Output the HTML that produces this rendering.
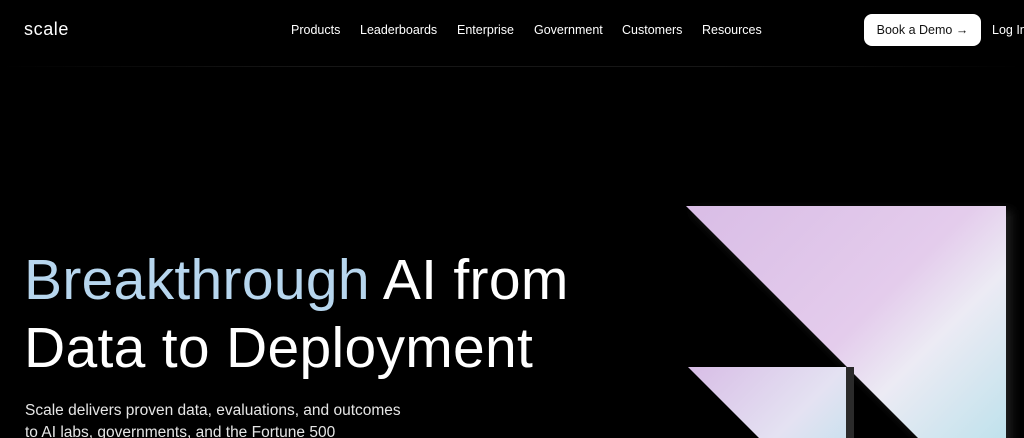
<!DOCTYPE html>
<html><head><meta charset="utf-8"><style>
*{margin:0;padding:0;box-sizing:border-box}
html,body{width:1024px;height:438px;overflow:hidden}
body{background:#000;font-family:"Liberation Sans",sans-serif;color:#fff;position:relative}
.logo{position:absolute;left:24px;top:19px;font-size:18px;letter-spacing:0.6px;font-weight:300}
.nav{position:absolute;top:23px;font-size:12.5px;color:#fff;white-space:nowrap}
.btn{position:absolute;left:864px;top:14px;width:117px;height:32px;background:#fff;color:#111;border-radius:8px;font-size:12.5px;text-align:center;line-height:32px}
.line{position:absolute;left:0;top:66px;width:1024px;height:1px;background:linear-gradient(90deg,#000,#161616 30%,#161616 70%,#000)}
h1{position:absolute;left:24px;top:246px;font-size:57px;font-weight:300;line-height:68px;letter-spacing:0.3px;white-space:nowrap}
h1 span{color:#b7d6ee}
p{position:absolute;left:25px;top:400px;font-size:15.5px;line-height:22px;color:#e6e6e6;white-space:nowrap;height:38px;overflow:hidden}
svg{position:absolute;left:0;top:0}
</style></head><body>
<div class="logo">scale</div>
<div class="nav" style="left:291px">Products</div>
<div class="nav" style="left:360px">Leaderboards</div>
<div class="nav" style="left:457px">Enterprise</div>
<div class="nav" style="left:534px">Government</div>
<div class="nav" style="left:622px">Customers</div>
<div class="nav" style="left:702px">Resources</div>
<div class="btn">Book a Demo →</div>
<div class="nav" style="left:992px">Log In</div>
<div class="line"></div>
<svg width="1024" height="438">
<defs>
<linearGradient id="g1" x1="0" y1="0" x2="1" y2="1">
<stop offset="0" stop-color="#d9bde6"/><stop offset="0.45" stop-color="#e4ccec"/><stop offset="0.6" stop-color="#ecebf4"/><stop offset="1" stop-color="#a8dde8"/>
</linearGradient>
<linearGradient id="g2" x1="0" y1="0" x2="1" y2="1">
<stop offset="0" stop-color="#d8bde6"/><stop offset="0.5" stop-color="#e4e2f2"/><stop offset="1" stop-color="#b0e0ea"/>
</linearGradient>
<filter id="b"><feGaussianBlur stdDeviation="5"/></filter>
</defs>
<polygon points="690,210 1012,210 1012,530" fill="#333" filter="url(#b)" opacity="0.6"/>
<polygon points="686,206 1006,206 1006,526" fill="url(#g1)"/>
<rect x="846" y="367" width="8" height="80" fill="#2a2a2a"/>
<polygon points="688,367 846,367 846,525" fill="url(#g2)"/>
</svg>
<h1><span>Breakthrough</span> AI from<br>Data to Deployment</h1>
<p>Scale delivers proven data, evaluations, and outcomes<br>to AI labs, governments, and the Fortune 500</p>
</body></html>
